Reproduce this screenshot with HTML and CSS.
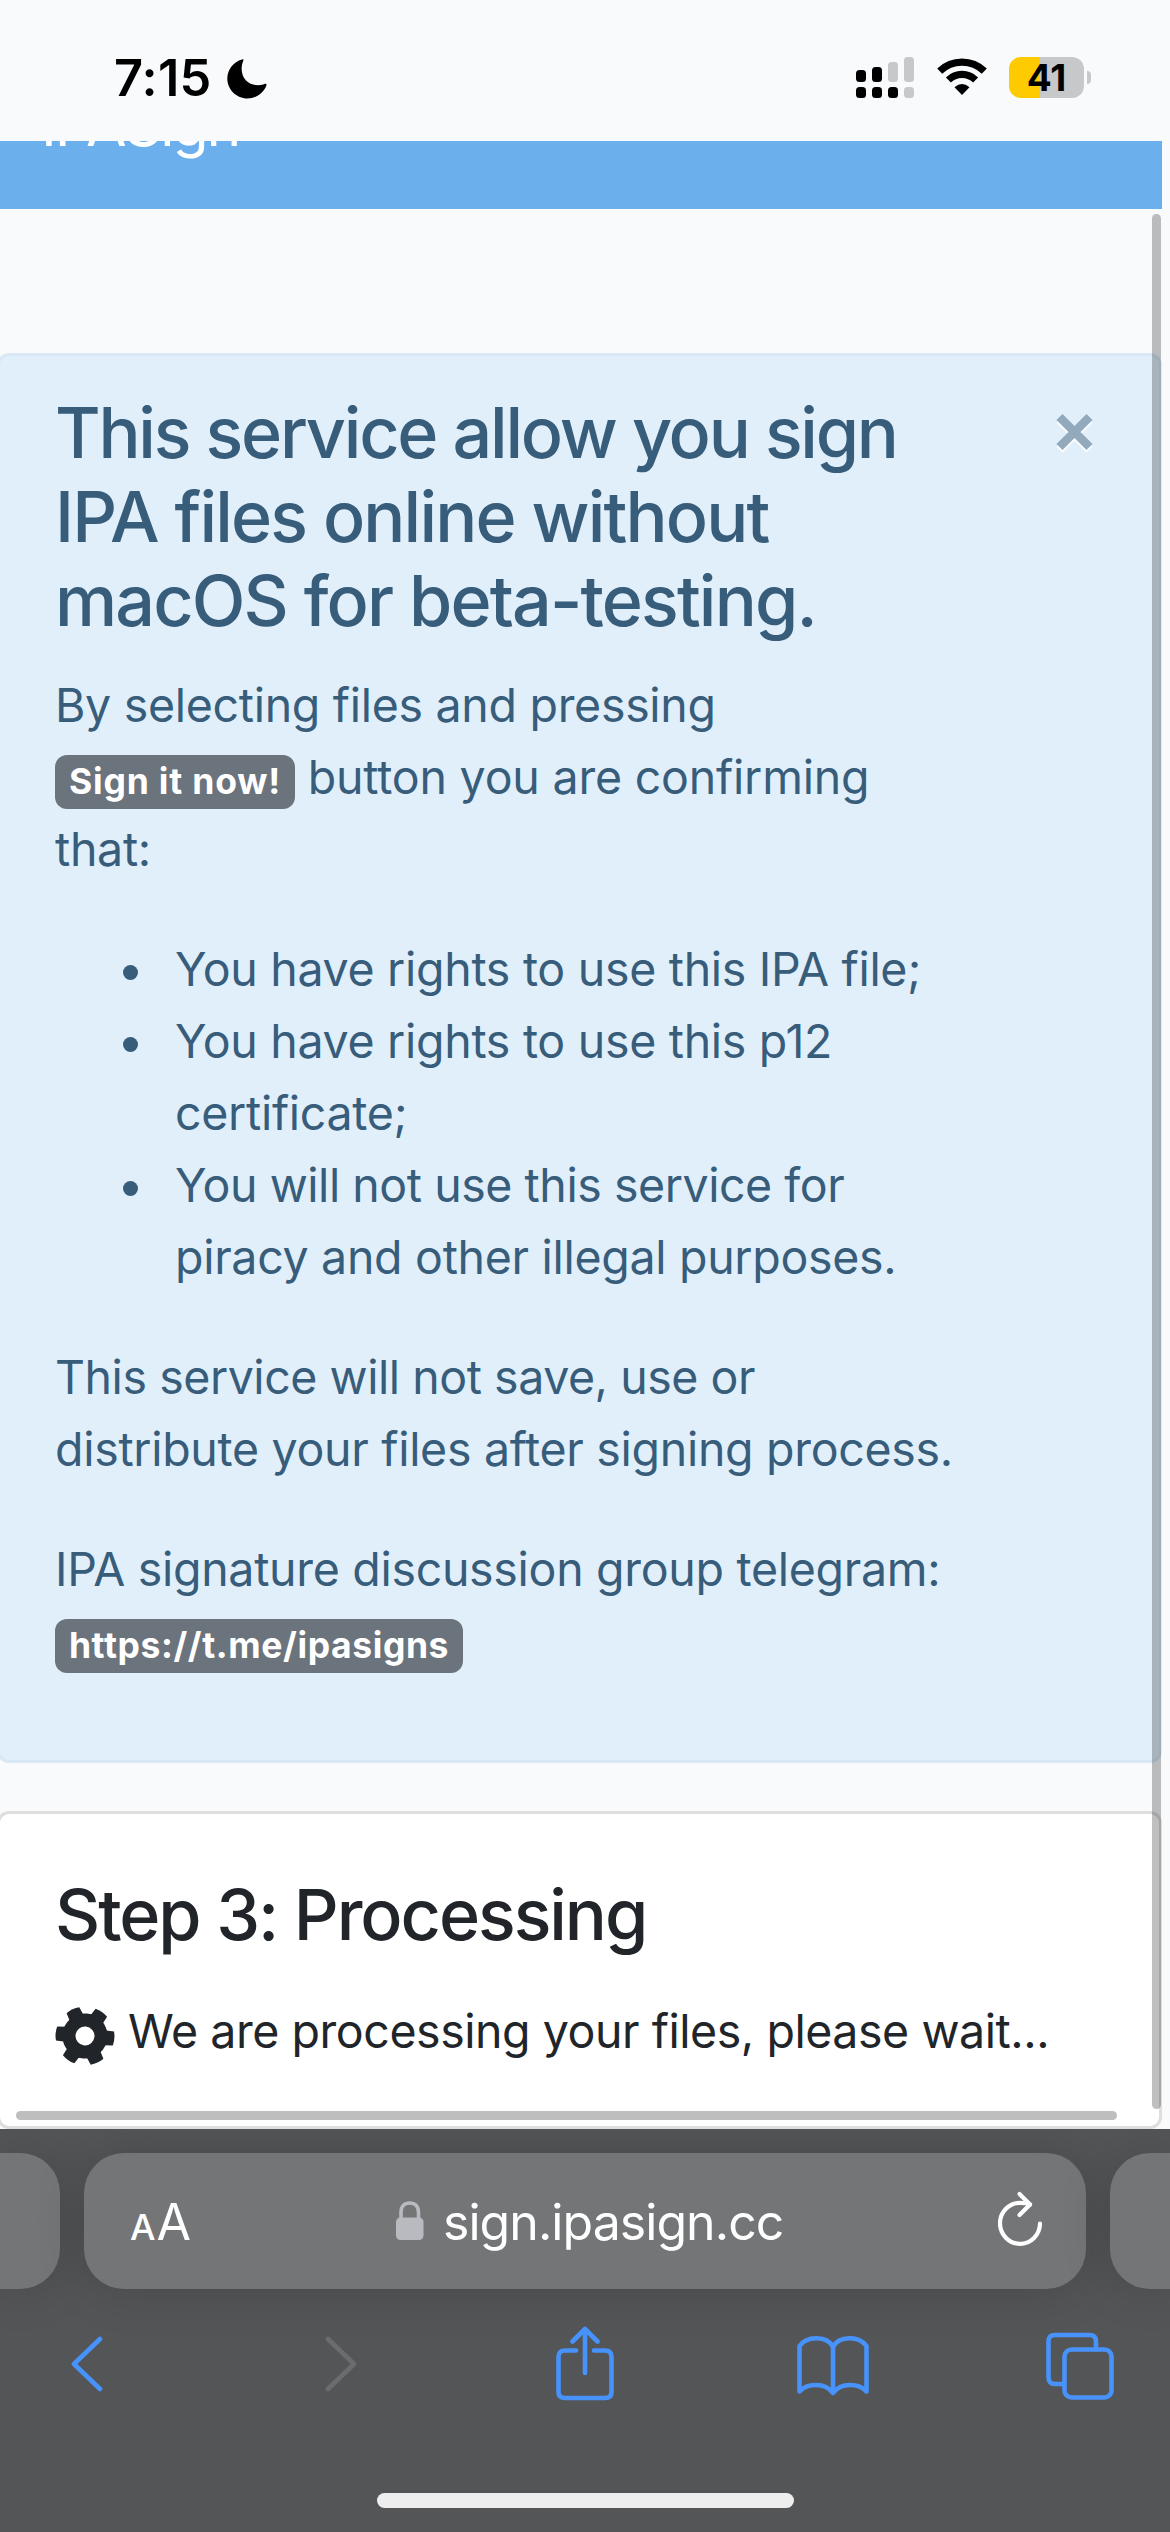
FILE: index.html
```html
<!DOCTYPE html>
<html lang="en">
<head>
<meta charset="utf-8">
<title>IPASign</title>
<link rel="stylesheet" href="styles.css">
</head>
<body>
<div class="screen">
  <header class="status">
    <div class="status-left">
      <span class="time">7:15</span>
      <svg class="moon" width="40" height="40" viewBox="0 0 40 40"><path d="M15 .4C17-.2 16.600 1 16 2.500C13.600 8.500 14.200 16.500 19 21.500C23.500 26 30.500 27.400 37 25.200C39 24.500 40 24.800 39.300 26.800C36.500 34 29 39.500 20.500 39.500C9.500 39.500.3 30.700.3 19.500C.3 10.500 6.500 2.700 15 .4Z"/></svg>
    </div>
    <div class="status-right">
      <svg width="59" height="42" viewBox="0 0 59 42">
        <g fill="#000"><rect y="13" width="10" height="12" rx="3.500"/><rect x="16" y="10" width="10" height="15" rx="3.500"/><rect y="30" width="10" height="11" rx="3.500"/><rect x="16" y="30" width="10" height="11" rx="3.500"/><rect x="32" y="30" width="10" height="11" rx="3.500"/></g>
        <g fill="#c7c8ca"><rect x="32" y="5" width="10" height="20" rx="3.500"/><rect x="48" width="10" height="25" rx="3.500"/><rect x="48" y="30" width="10" height="11" rx="3.500"/></g>
      </svg>
      <svg class="wifi" width="50" height="38" viewBox="0 0 50 38" fill="none" stroke="#000" stroke-width="7.200"><path d="M2.700 13.200A32 32 0 0 1 47.300 13.200"/><path d="M11.400 22A19.500 19.500 0 0 1 38.600 22"/><path d="M17.500 29.300Q25 22.500 32.500 29.300L25 37Z" fill="#000" stroke="none"/></svg>
      <div class="battery"><span class="level">41</span></div>
      <i class="nub"></i>
    </div>
  </header>

  <main class="page">
    <nav class="navbar"><span class="brand">IPASign</span></nav>

    <section class="alert">
      <svg class="close" width="40" height="42" viewBox="0 0 40 42" fill="none" stroke-width="8.500"><path stroke="#fff" d="M4.500 6.500L34.500 36.500M34.500 6.500L4.500 36.500"/><path stroke="#93a9bc" d="M4.500 4L34.500 34M34.500 4L4.500 34"/></svg>
      <h3 class="title"><span class="tight">This service allow you sign</span><br>IPA files online without<br>macOS for beta-testing.</h3>
      <p>By selecting files and pressing<br><span class="badge b1">Sign it now!</span> <span class="loose">button you are confirming</span><br>that:</p>
      <ul>
        <li>You have rights to use this IPA file;</li>
        <li>You have rights to use this p12<br>certificate;</li>
        <li><span class="snug">You will not use this service for</span><br>piracy and other illegal purposes.</li>
      </ul>
      <p><span class="snug">This service will not save, use or</span><br>distribute your files after signing process.</p>
      <p>IPA signature discussion group telegram:<br><span class="badge b2">https://t.me/ipasigns</span></p>
    </section>

    <section class="card">
      <h3 class="step">Step 3: Processing</h3>
      <p class="wait"><svg class="gear" width="60" height="60" viewBox="-30 -30 60 60"><g transform="rotate(5)"><circle r="16" fill="none" stroke="#212529" stroke-width="13"/><g fill="#212529"><path d="M-7.500-19L-7-28.500Q0-30.500 7-28.500L7.500-19Z" transform="rotate(30)"/><path d="M-7.500-19L-7-28.500Q0-30.500 7-28.500L7.500-19Z" transform="rotate(90)"/><path d="M-7.500-19L-7-28.500Q0-30.500 7-28.500L7.500-19Z" transform="rotate(150)"/><path d="M-7.500-19L-7-28.500Q0-30.500 7-28.500L7.500-19Z" transform="rotate(210)"/><path d="M-7.500-19L-7-28.500Q0-30.500 7-28.500L7.500-19Z" transform="rotate(270)"/><path d="M-7.500-19L-7-28.500Q0-30.500 7-28.500L7.500-19Z" transform="rotate(330)"/></g></g></svg><span class="snug">We are processing your files, please wait...</span></p>
    </section>
    <i class="vbar"></i>
    <i class="hbar"></i>
  </main>

  <footer class="chrome">
    <div class="tabs">
      <div class="pill side left"></div>
      <div class="pill address">
        <span class="aa"><small>A</small>A</span>
        <span class="host">
          <svg class="lock" width="28" height="40" viewBox="0 0 28 40"><rect y="16.500" width="27.500" height="22.500" rx="4.500" fill="#b9bac0"/><path d="M5 18V11.500C5 5 8.500 2 13.700 2S22.500 5 22.500 11.500V18" fill="none" stroke="#b9bac0" stroke-width="3.600"/></svg>
          <span class="url">sign.ipasign.cc</span>
        </span>
        <svg class="reload" width="46" height="56" viewBox="0 0 46 56" fill="none" stroke="#fff" stroke-width="4.200" stroke-linecap="round" stroke-linejoin="round"><path d="M42 32.500A20 20.500 0 1 1 22 11.800C26 11.800 29 12 32 13.500"/><path d="M21.500 3L32 13.500L21.500 24"/></svg>
      </div>
      <div class="pill side right"></div>
    </div>
    <div class="tools">
      <svg width="32" height="76" viewBox="0 0 32 76" class="tool"><path d="M29 13L3 38L29 63"/></svg>
      <svg width="32" height="76" viewBox="0 0 32 76" class="tool forward"><path d="M3 13L29 38L3 63"/></svg>
      <svg width="58" height="76" viewBox="0 0 58 76" class="tool share"><path d="M20 24.500H9Q2.500 24.500 2.500 31V66Q2.500 72 9 72H49Q55.500 72 55.500 66V31Q55.500 24.500 49 24.500H38M29 47V3M16.500 15.500L29 3L41.500 15.500"/></svg>
      <svg width="72" height="76" viewBox="0 0 72 76" class="tool book"><path d="M36 21C30 9.500 10 9.500 2.500 20V65.500C10 57 28 56 36 67C44 56 62 57 69.500 65.500V20C62 9.500 42 9.500 36 21V67"/></svg>
      <svg width="68" height="76" viewBox="0 0 68 76" class="tool windows"><rect x="18.500" y="23.500" width="47" height="48" rx="7"/><path d="M18 58H9Q2.500 58 2.500 51.500V15.500Q2.500 9 9 9H43.500Q50 9 50 15.500V23"/></svg>
    </div>
    <div class="home"></div>
  </footer>
</div>
</body>
</html>
```
FILE: styles.css
```css
* { box-sizing: border-box; }
body { margin: 0; background: #f9fafc; font-family: Inter, "Liberation Sans", sans-serif; }
.screen { width: 1170px; height: 2532px; display: flex; flex-direction: column; overflow: hidden; }
svg { display: block; flex: none; }

.status { height: 141px; flex: none; display: flex; justify-content: space-between; padding: 57px 79px 0 114px; color: #000; }
.status-left, .status-right { display: flex; align-items: flex-start; }
.time { font-size: 50.500px; font-weight: 600; line-height: 42px; width: 113px; letter-spacing: .2px; white-space: nowrap; }
.moon { margin-top: 2px; }
.wifi { margin: 1px 22px 0 22px; }
.battery { width: 75px; height: 41px; border-radius: 12px; background: linear-gradient(90deg, #fdcb00 31px, #c7c8ca 31px); text-align: center; }
.level { font-size: 37px; font-weight: 700; line-height: 42px; }
.nub { width: 4px; height: 13px; margin: 14px 0 0 3px; background: #c7c8ca; border-radius: 0 4px 4px 0; }

.page { position: relative; height: 1988px; flex: none; overflow: hidden; }
.navbar { width: 1162px; height: 68px; background: #6bb0ec; overflow: hidden; display: flex; align-items: flex-start; padding-left: 41px; }
.brand { color: #fff; font-size: 59px; line-height: 72px; margin-top: -52px; letter-spacing: -2.100px; white-space: nowrap; }

.alert { position: relative; width: 1165px; height: 1410px; margin: 144px 0 0 -3px; padding: 35px 55px 0; border: 3px solid #d9e8f4; border-radius: 12px; background: #e1effb; color: #385d7b; white-space: nowrap; }
.close { position: absolute; left: 1055px; top: 57px; }
h3 { margin: 0; font-size: 70px; line-height: 84px; font-weight: 500; letter-spacing: -1.850px; }
.tight { letter-spacing: -2.250px; }
.title { margin-bottom: 26px; }
p, li { font-size: 46.500px; line-height: 72px; letter-spacing: -.300px; }
.snug { letter-spacing: -.450px; }
.loose { letter-spacing: -.200px; }
p { margin: 0 0 48px; }
ul { margin: 0 0 48px; padding-left: 120px; list-style: none; }
li::before { content: ""; display: inline-block; width: 15px; height: 15px; margin: 0 37px 0 -52px; border-radius: 50%; background: #385d7b; vertical-align: 6px; }
.badge { display: inline-block; padding: 9px 0 10px; border-radius: 12px; background: #6b737c; color: #fff; font-size: 35.500px; line-height: 35px; font-weight: 700; letter-spacing: .600px; text-align: center; }
.b1 { width: 240px; letter-spacing: .8px; }
.b2 { width: 408px; }

.card { width: 1165px; height: 318px; margin: 48px 0 0 -3px; padding: 59px 55px 0; border: 3px solid #dededf; border-radius: 12px; background: #fff; color: #212529; white-space: nowrap; }
.step { margin-bottom: 38px; letter-spacing: -2.050px; }
.wait { display: flex; margin: 0; }
.gear { margin: 11px 13px 0 0; }
.vbar { position: absolute; left: 1152px; top: 73px; width: 9px; height: 1895px; border-radius: 5px; background: rgba(0,0,0,.25); }
.hbar { position: absolute; left: 16px; top: 1970px; width: 1101px; height: 9px; border-radius: 5px; background: #bebebe; }

.chrome { flex: 1; background: #545557; overflow: hidden; display: flex; flex-direction: column; align-items: center; padding-top: 24px; }
.tabs { display: flex; width: 1170px; gap: 24px; }
.pill { height: 136px; background: #747577; box-shadow: 0 0 50px rgba(0,0,0,.16); }
.side { width: 60px; }
.left { border-radius: 0 40px 40px 0; }
.right { border-radius: 40px 0 0 40px; }
.address { flex: 1; border-radius: 40px; display: flex; padding: 0 0 0 46px; color: #fff; }
.aa { width: 266px; font-size: 50px; line-height: 72px; margin-top: 33px; display: flex; align-items: baseline; gap: 1px; }
.aa small { font-size: 36px; font-weight: 500; }
.host { display: flex; width: 602px; gap: 19px; }
.lock { margin-top: 48px; }
.url { font-size: 50px; line-height: 72px; margin-top: 33px; letter-spacing: -.950px; }
.reload { margin-top: 38px; }
.tools { width: 1170px; display: flex; padding-left: 71px; margin-top: 37px; }
.tool { fill: none; stroke: #4793fb; stroke-width: 4.600px; stroke-linecap: round; stroke-linejoin: round; }
.forward { stroke: #6b6c6e; margin-left: 222px; }
.share { margin-left: 199px; }
.book { margin-left: 183px; }
.windows { margin-left: 177px; }
.home { width: 417px; height: 15px; border-radius: 8px; background: #eee; margin-top: 91px; }
```
